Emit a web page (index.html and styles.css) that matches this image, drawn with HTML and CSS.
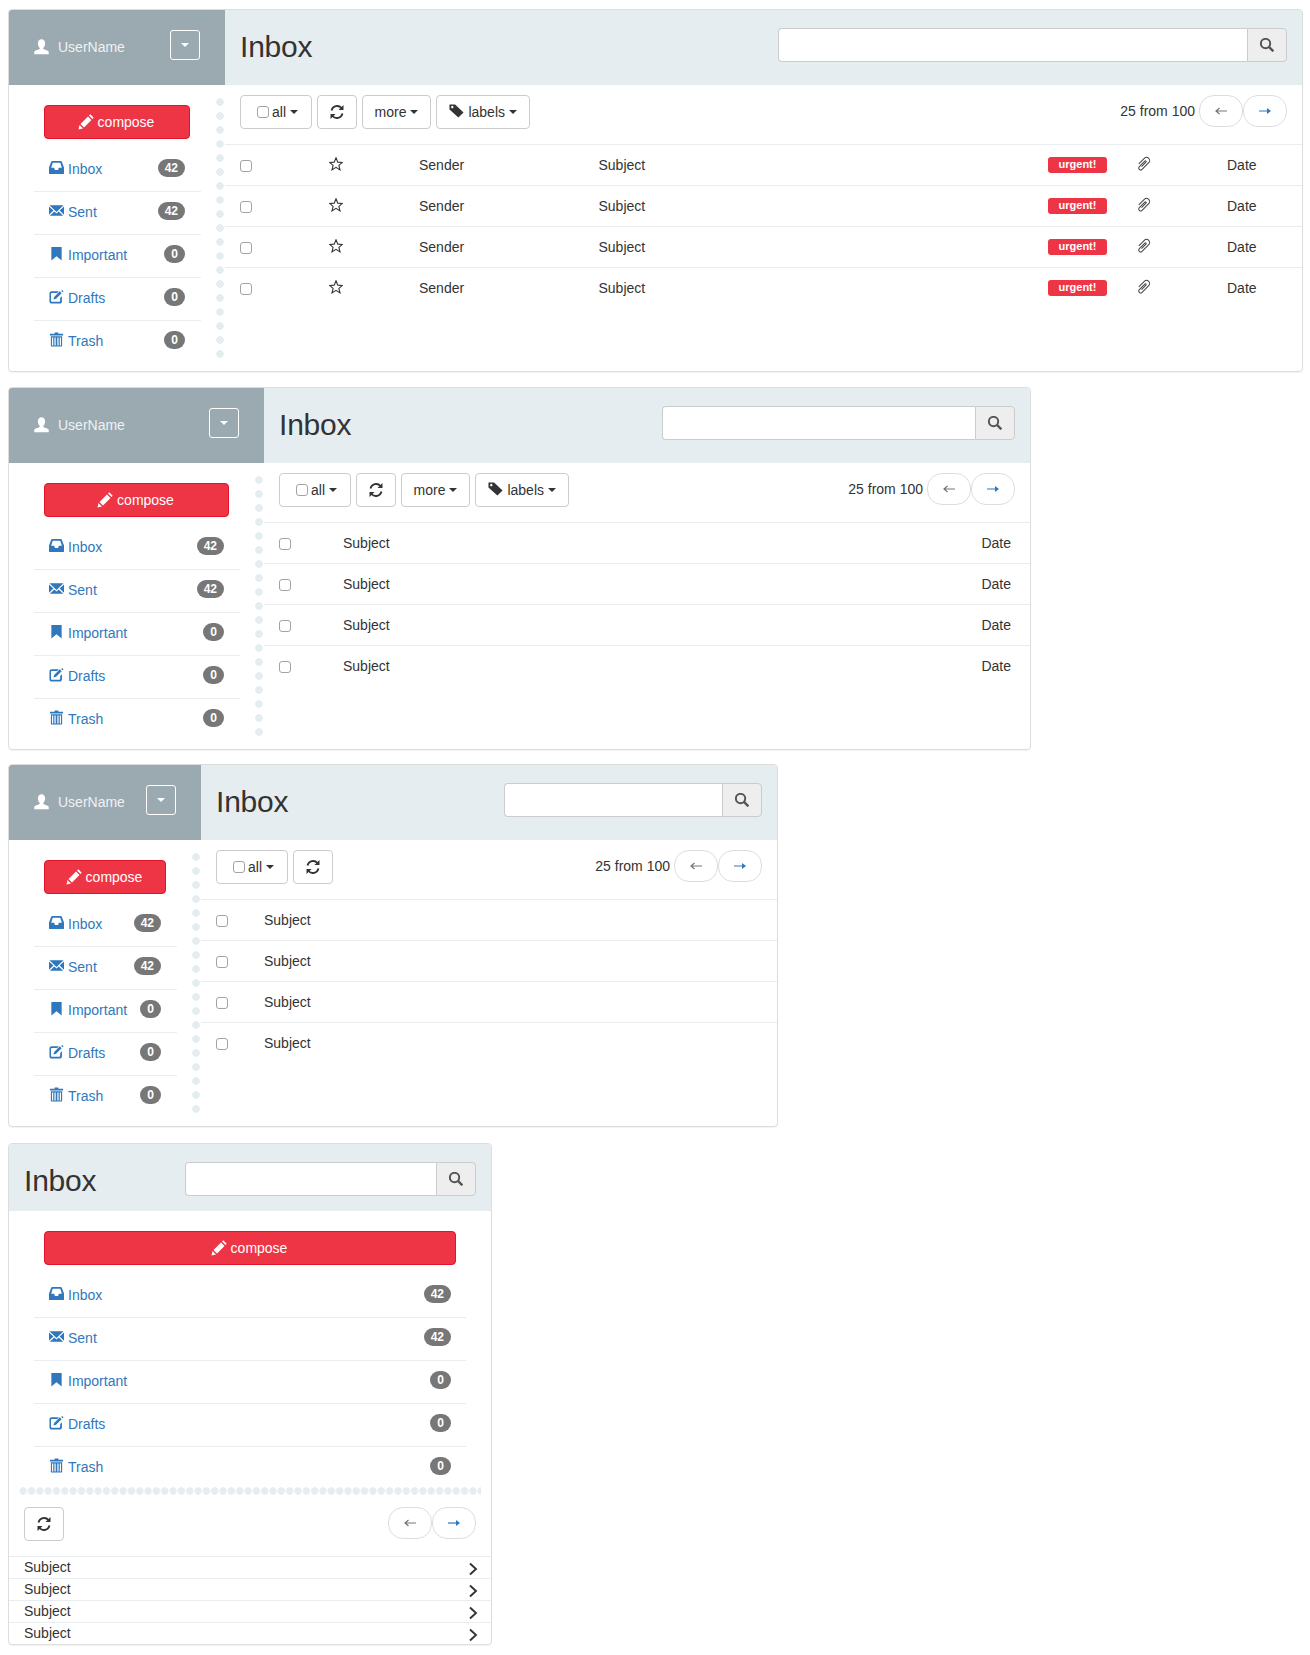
FILE: index.html
```html
<!DOCTYPE html>
<html lang="en">
<head>
    <meta charset="UTF-8">
    <meta name="viewport" content="width=device-width, initial-scale=1.0">
    <title>Mailbox layouts</title>
    <link rel="stylesheet" href="styles.css">
</head>
<body>
    <!-- icons used by all four boxes -->
    <svg class="sprite" xmlns="http://www.w3.org/2000/svg">
        <symbol id="i-user" viewBox="1 0.5 14 15.5"><path d="M8 0.800c2.200 0 3.500 1.700 3.500 4 0 1.800-.8 3.500-1.800 4.300v1.200c1.800.8 5.300 1.600 5.300 3v1.900H1v-1.900c0-1.400 3.500-2.200 5.300-3V9.100C5.300 8.300 4.500 6.600 4.500 4.800c0-2.300 1.300-4 3.500-4z"/></symbol>
        <symbol id="i-pencil" viewBox="0 0 16 16"><path d="M0.500 15.500l1-4.500 3.500 3.500zM2.500 10l7.500-7.500 3.500 3.500-7.500 7.500zM11 1.500l1.300-1.200 3.400 3.400-1.200 1.300z"/></symbol>
        <symbol id="i-inbox" viewBox="0 0 16 16"><path fill-rule="evenodd" d="M3.500 1h9c.6 0 1 .3 1.200.8L16 8v6c0 .6-.4 1-1 1H1c-.6 0-1-.4-1-1V8l2.300-6.200C2.500 1.300 2.900 1 3.500 1zM4 3L2.300 8.300H5.500l.8 2.300h3.400l.8-2.300h3.200L12 3z"/></symbol>
        <symbol id="i-envelope" viewBox="0 0 16 16"><path d="M0.500 2.500h15L8 9.500zM0 3.800v8.800l4.700-4.500zM16 3.800v8.800l-4.700-4.500zM0.800 13.500l4.900-4.500L8 11.200l2.300-2.200 4.900 4.500z"/></symbol>
        <symbol id="i-bookmark" viewBox="0 0 16 16"><path d="M2.500 1h11v14.500L8 11l-5.500 4.500z"/></symbol>
        <symbol id="i-edit" viewBox="0 0 16 16"><path d="M2.800 2.500h7.700L8.700 4.300H3c-.5 0-.9.400-.9.900v7.600c0 .5.400.9.900.9h8c.5 0 .9-.4.900-.9V9.500l1.900-1.900v5.600c0 1.300-1 2.300-2.300 2.300H2.800C1.500 15.500.500 14.500.500 13.200V4.800C.500 3.500 1.500 2.500 2.800 2.500zM5.500 8.500l6-6 2 2-6 6-2.800.8zM14 1l1.500 1.500-1 1-1.500-1.500z"/></symbol>
        <symbol id="i-trash" viewBox="0 0 16 16"><path d="M6 .5h4v1.300h5v2H1v-2h5zM2 4.500h12V15c0 .3-.2.500-.5.500h-11c-.3 0-.5-.2-.5-.5zM3.200 5.800v8.500h1.300V5.800zM5.800 5.800v8.500h1.300V5.800zM8.900 5.800v8.500h1.300V5.800zM11.500 5.800v8.500h1.300V5.800z" fill-rule="evenodd"/></symbol>
        <symbol id="i-star" viewBox="1 1 14 14"><path d="M8 1.800l1.800 4.300 4.600.3-3.500 3 1.100 4.500L8 11.400l-4 2.500 1.100-4.500-3.500-3 4.600-.3z" fill="none" stroke="currentColor" stroke-width="1.100"/></symbol>
        <symbol id="i-refresh" viewBox="1 1 14 14"><path d="M2.500 6.500A5.800 5.800 0 0 1 12.500 4M13.500 9.500A5.800 5.800 0 0 1 3.500 12" fill="none" stroke="currentColor" stroke-width="1.800"/><path d="M14.500 1v5h-5zM1.500 15v-5h5z"/></symbol>
        <symbol id="i-tag" viewBox="0 0 16 16"><path fill-rule="evenodd" d="M0.500 1.500h6l9 8.500-5.500 5.500-9.500-8.500zM3.500 3a1.300 1.300 0 1 0 .01 0z"/></symbol>
        <symbol id="i-clip" viewBox="0 0 16 16"><path transform="translate(8.200 7.800) rotate(45) scale(.78)" d="M-4 4V-6a4 4 0 0 1 8 0V6a2.500 2.500 0 0 1-5 0V-4a1 1 0 0 1 2 0V4" fill="none" stroke="currentColor" stroke-width="1.300"/></symbol>
        <symbol id="i-search" viewBox="0.800 0.800 14.400 14.400"><circle cx="6.500" cy="6.500" r="4.800" fill="none" stroke="currentColor" stroke-width="2"/><path d="M10 10l4.500 4.500" stroke="currentColor" stroke-width="2.400"/></symbol>
        <symbol id="i-left" viewBox="0 0 12 8"><path d="M1 4h11M4.500 1L1 4l3.500 3" fill="none" stroke="currentColor" stroke-width="1.200"/></symbol>
        <symbol id="i-right" viewBox="0 0 12 8"><path d="M0 4h11" fill="none" stroke="currentColor" stroke-width="1.200"/><path d="M8 1l4 3-4 3z"/></symbol>
        <symbol id="i-chevron" viewBox="0 0 10 14"><path d="M2 1.500L8 7l-6 5.500" fill="none" stroke="currentColor" stroke-width="1.900"/></symbol>
    </svg>

    <!-- widest -->
    <div class="mailbox mailbox-lg">
        <div class="box-head">
            <div class="user-bar">
                <svg class="icon"><use href="#i-user"/></svg>
                <span class="user-name">UserName</span>
                <button class="user-toggle"><span class="caret"></span></button>
            </div>
            <div class="title-bar">
                <h1>Inbox</h1>
                <div class="search">
                    <input type="text">
                    <button><svg class="icon"><use href="#i-search"/></svg></button>
                </div>
            </div>
        </div>
        <div class="box-body">
            <div class="side">
                <button class="compose"><svg class="icon"><use href="#i-pencil"/></svg>compose</button>
                <ul class="folders">
                    <li><a href="#"><svg class="icon"><use href="#i-inbox"/></svg>Inbox</a><span class="badge">42</span></li>
                    <li><a href="#"><svg class="icon"><use href="#i-envelope"/></svg>Sent</a><span class="badge">42</span></li>
                    <li><a href="#"><svg class="icon"><use href="#i-bookmark"/></svg>Important</a><span class="badge">0</span></li>
                    <li><a href="#"><svg class="icon"><use href="#i-edit"/></svg>Drafts</a><span class="badge">0</span></li>
                    <li><a href="#"><svg class="icon"><use href="#i-trash"/></svg>Trash</a><span class="badge">0</span></li>
                </ul>
            </div>
            <div class="dots"></div>
            <div class="main">
                <div class="toolbar">
                    <button class="btn btn-all"><input type="checkbox">all<span class="caret"></span></button>
                    <button class="btn btn-icon"><svg class="icon"><use href="#i-refresh"/></svg></button>
                    <button class="btn">more<span class="caret"></span></button>
                    <button class="btn"><svg class="icon icon-tag"><use href="#i-tag"/></svg>labels<span class="caret"></span></button>
                    <div class="pager">
                        <span>25 from 100</span>
                        <button class="page-btn"><svg class="arrow"><use href="#i-left"/></svg></button>
                        <button class="page-btn page-next"><svg class="arrow"><use href="#i-right"/></svg></button>
                    </div>
                </div>
                <div class="row row-full">
                    <input type="checkbox"><svg class="icon icon-star"><use href="#i-star"/></svg><span>Sender</span><span>Subject</span><span class="label">urgent!</span><svg class="icon icon-clip"><use href="#i-clip"/></svg><span>Date</span>
                </div>
                <div class="row row-full">
                    <input type="checkbox"><svg class="icon icon-star"><use href="#i-star"/></svg><span>Sender</span><span>Subject</span><span class="label">urgent!</span><svg class="icon icon-clip"><use href="#i-clip"/></svg><span>Date</span>
                </div>
                <div class="row row-full">
                    <input type="checkbox"><svg class="icon icon-star"><use href="#i-star"/></svg><span>Sender</span><span>Subject</span><span class="label">urgent!</span><svg class="icon icon-clip"><use href="#i-clip"/></svg><span>Date</span>
                </div>
                <div class="row row-full">
                    <input type="checkbox"><svg class="icon icon-star"><use href="#i-star"/></svg><span>Sender</span><span>Subject</span><span class="label">urgent!</span><svg class="icon icon-clip"><use href="#i-clip"/></svg><span>Date</span>
                </div>
            </div>
        </div>
    </div>

    <!-- medium -->
    <div class="mailbox mailbox-md">
        <div class="box-head">
            <div class="user-bar">
                <svg class="icon"><use href="#i-user"/></svg>
                <span class="user-name">UserName</span>
                <button class="user-toggle"><span class="caret"></span></button>
            </div>
            <div class="title-bar">
                <h1>Inbox</h1>
                <div class="search">
                    <input type="text">
                    <button><svg class="icon"><use href="#i-search"/></svg></button>
                </div>
            </div>
        </div>
        <div class="box-body">
            <div class="side">
                <button class="compose"><svg class="icon"><use href="#i-pencil"/></svg>compose</button>
                <ul class="folders">
                    <li><a href="#"><svg class="icon"><use href="#i-inbox"/></svg>Inbox</a><span class="badge">42</span></li>
                    <li><a href="#"><svg class="icon"><use href="#i-envelope"/></svg>Sent</a><span class="badge">42</span></li>
                    <li><a href="#"><svg class="icon"><use href="#i-bookmark"/></svg>Important</a><span class="badge">0</span></li>
                    <li><a href="#"><svg class="icon"><use href="#i-edit"/></svg>Drafts</a><span class="badge">0</span></li>
                    <li><a href="#"><svg class="icon"><use href="#i-trash"/></svg>Trash</a><span class="badge">0</span></li>
                </ul>
            </div>
            <div class="dots"></div>
            <div class="main">
                <div class="toolbar">
                    <button class="btn btn-all"><input type="checkbox">all<span class="caret"></span></button>
                    <button class="btn btn-icon"><svg class="icon"><use href="#i-refresh"/></svg></button>
                    <button class="btn">more<span class="caret"></span></button>
                    <button class="btn"><svg class="icon icon-tag"><use href="#i-tag"/></svg>labels<span class="caret"></span></button>
                    <div class="pager">
                        <span>25 from 100</span>
                        <button class="page-btn"><svg class="arrow"><use href="#i-left"/></svg></button>
                        <button class="page-btn page-next"><svg class="arrow"><use href="#i-right"/></svg></button>
                    </div>
                </div>
                <div class="row row-date"><input type="checkbox"><span>Subject</span><span>Date</span></div>
                <div class="row row-date"><input type="checkbox"><span>Subject</span><span>Date</span></div>
                <div class="row row-date"><input type="checkbox"><span>Subject</span><span>Date</span></div>
                <div class="row row-date"><input type="checkbox"><span>Subject</span><span>Date</span></div>
            </div>
        </div>
    </div>

    <!-- small -->
    <div class="mailbox mailbox-sm">
        <div class="box-head">
            <div class="user-bar">
                <svg class="icon"><use href="#i-user"/></svg>
                <span class="user-name">UserName</span>
                <button class="user-toggle"><span class="caret"></span></button>
            </div>
            <div class="title-bar">
                <h1>Inbox</h1>
                <div class="search">
                    <input type="text">
                    <button><svg class="icon"><use href="#i-search"/></svg></button>
                </div>
            </div>
        </div>
        <div class="box-body">
            <div class="side">
                <button class="compose"><svg class="icon"><use href="#i-pencil"/></svg>compose</button>
                <ul class="folders">
                    <li><a href="#"><svg class="icon"><use href="#i-inbox"/></svg>Inbox</a><span class="badge">42</span></li>
                    <li><a href="#"><svg class="icon"><use href="#i-envelope"/></svg>Sent</a><span class="badge">42</span></li>
                    <li><a href="#"><svg class="icon"><use href="#i-bookmark"/></svg>Important</a><span class="badge">0</span></li>
                    <li><a href="#"><svg class="icon"><use href="#i-edit"/></svg>Drafts</a><span class="badge">0</span></li>
                    <li><a href="#"><svg class="icon"><use href="#i-trash"/></svg>Trash</a><span class="badge">0</span></li>
                </ul>
            </div>
            <div class="dots"></div>
            <div class="main">
                <div class="toolbar">
                    <button class="btn btn-all"><input type="checkbox">all<span class="caret"></span></button>
                    <button class="btn btn-icon"><svg class="icon"><use href="#i-refresh"/></svg></button>
                    <div class="pager">
                        <span>25 from 100</span>
                        <button class="page-btn"><svg class="arrow"><use href="#i-left"/></svg></button>
                        <button class="page-btn page-next"><svg class="arrow"><use href="#i-right"/></svg></button>
                    </div>
                </div>
                <div class="row row-subject"><input type="checkbox"><span>Subject</span></div>
                <div class="row row-subject"><input type="checkbox"><span>Subject</span></div>
                <div class="row row-subject"><input type="checkbox"><span>Subject</span></div>
                <div class="row row-subject"><input type="checkbox"><span>Subject</span></div>
            </div>
        </div>
    </div>

    <!-- phone -->
    <div class="mailbox mailbox-xs">
        <div class="box-head">
            <div class="title-bar">
                <h1>Inbox</h1>
                <div class="search">
                    <input type="text">
                    <button><svg class="icon"><use href="#i-search"/></svg></button>
                </div>
            </div>
        </div>
        <div class="box-body">
            <div class="side">
                <button class="compose"><svg class="icon"><use href="#i-pencil"/></svg>compose</button>
                <ul class="folders">
                    <li><a href="#"><svg class="icon"><use href="#i-inbox"/></svg>Inbox</a><span class="badge">42</span></li>
                    <li><a href="#"><svg class="icon"><use href="#i-envelope"/></svg>Sent</a><span class="badge">42</span></li>
                    <li><a href="#"><svg class="icon"><use href="#i-bookmark"/></svg>Important</a><span class="badge">0</span></li>
                    <li><a href="#"><svg class="icon"><use href="#i-edit"/></svg>Drafts</a><span class="badge">0</span></li>
                    <li><a href="#"><svg class="icon"><use href="#i-trash"/></svg>Trash</a><span class="badge">0</span></li>
                </ul>
            </div>
            <div class="dots"></div>
            <div class="main">
                <div class="toolbar">
                    <button class="btn btn-icon"><svg class="icon"><use href="#i-refresh"/></svg></button>
                    <div class="pager">
                        <button class="page-btn"><svg class="arrow"><use href="#i-left"/></svg></button>
                        <button class="page-btn page-next"><svg class="arrow"><use href="#i-right"/></svg></button>
                    </div>
                </div>
                <div class="row row-mobile"><span>Subject</span><svg class="chevron"><use href="#i-chevron"/></svg></div>
                <div class="row row-mobile"><span>Subject</span><svg class="chevron"><use href="#i-chevron"/></svg></div>
                <div class="row row-mobile"><span>Subject</span><svg class="chevron"><use href="#i-chevron"/></svg></div>
                <div class="row row-mobile"><span>Subject</span><svg class="chevron"><use href="#i-chevron"/></svg></div>
            </div>
        </div>
    </div>
</body>
</html>
```

FILE: styles.css
```css
* {
    box-sizing: border-box;
}
body {
    margin: 0;
    padding: 9px 8px 0;
    background: #fff;
    color: #333;
    font-family: "Liberation Sans", Arial, sans-serif;
    font-size: 14px;
    line-height: 20px;
}
button {
    font: inherit;
    color: inherit;
}
input[type="checkbox"] {
    appearance: none;
    width: 12px;
    height: 12px;
    margin: 0;
    border: 1px solid #a3a3a3;
    border-radius: 3px;
    background: #fff;
}
.sprite {
    position: absolute;
    width: 0;
    height: 0;
}
.icon {
    width: 14px;
    height: 14px;
    fill: currentColor;
    flex: none;
}
.caret {
    display: inline-block;
    width: 0;
    height: 0;
    margin-left: 4px;
    vertical-align: middle;
    border-top: 4px solid currentColor;
    border-left: 4px solid transparent;
    border-right: 4px solid transparent;
}

/* box sizes */
.mailbox {
    margin-bottom: 15px;
    border: 1px solid #ddd;
    border-radius: 4px;
    box-shadow: 0 1px 1px rgba(0, 0, 0, 0.05);
    overflow: hidden;
}
.mailbox-lg {
    width: 1295px;
    --side: 216px;
    --search: 509px;
}
.mailbox-md {
    width: 1023px;
    margin-bottom: 14px;
    --side: 255px;
    --search: 353px;
}
.mailbox-sm {
    width: 770px;
    margin-bottom: 16px;
    --side: 192px;
    --search: 258px;
}
.mailbox-xs {
    width: 484px;
    --search: 291px;
}

/* head */
.box-head {
    display: flex;
    height: 75px;
}
.user-bar {
    display: flex;
    align-items: center;
    flex: none;
    width: var(--side);
    padding: 0 25px 5px;
    background: #9ba9b1;
    color: #fff;
}
.user-bar .icon {
    width: 15px;
    height: 16px;
    margin-right: 9px;
    margin-top: 3px;
}
.user-name {
    flex: 1;
    color: #eef2f4;
    margin-top: 4px;
}
.user-toggle {
    display: flex;
    align-items: center;
    justify-content: center;
    width: 30px;
    height: 30px;
    padding: 0;
    background: transparent;
    border: 1px solid #fff;
    border-radius: 3px;
    color: #fff;
}
.user-toggle .caret {
    margin: 0;
}
.title-bar {
    display: flex;
    align-items: center;
    justify-content: space-between;
    flex: 1;
    padding: 18px 15px 23px;
    background: #e6edf0;
}
h1 {
    margin: 3px 0 0;
    font-size: 30px;
    font-weight: 400;
    letter-spacing: -0.2px;
    line-height: 34px;
    color: #333;
}
.search {
    display: flex;
    width: var(--search);
    height: 34px;
}
.search input {
    flex: 1;
    min-width: 0;
    border: 1px solid #ccc;
    border-right: 0;
    border-radius: 4px 0 0 4px;
    background: #fff;
}
.search button {
    width: 40px;
    padding: 0;
    border: 1px solid #ccc;
    border-radius: 0 4px 4px 0;
    background: #eee;
    color: #555;
}
.search .icon {
    display: block;
    margin: 0 auto;
}

/* body */
.box-body {
    display: flex;
}
.side {
    flex: none;
    width: calc(var(--side) - 9px);
    padding: 20px 15px 0 25px;
}
.compose {
    display: flex;
    align-items: center;
    justify-content: center;
    width: calc(100% - 21px);
    height: 34px;
    margin: 0 11px 0 10px;
    padding: 0 2px 0 0;
    background: #ee3545;
    border: 1px solid #e2132a;
    border-radius: 4px;
    color: #fff;
}
.compose .icon {
    width: 16px;
    height: 16px;
    margin-right: 4px;
}
.folders {
    list-style: none;
    margin: 10px 0 0;
    padding: 0;
}
.folders li {
    display: flex;
    align-items: center;
    justify-content: space-between;
    height: 43px;
    padding: 0 16px 0 15px;
    border-bottom: 1px solid #e7edf1;
}
.folders li:last-child {
    border-bottom-color: transparent;
}
.folders a {
    display: flex;
    align-items: center;
    margin-top: -3px;
    color: #2f78bd;
    text-decoration: none;
}
.folders .icon {
    width: 15px;
    height: 15px;
    margin-top: -2px;
    margin-right: 4px;
}
.badge {
    padding: 3px 7px;
    margin-top: -5px;
    border-radius: 10px;
    background: #777;
    color: #fff;
    font-size: 12px;
    font-weight: 700;
    line-height: 12px;
}
.dots {
    flex: none;
    width: 8px;
    height: 266px;
    margin: 10px 1px 10px 0;
    background: radial-gradient(circle, #e6edf0 3.5px, transparent 4px) center top / 8px 14px repeat-y;
}
.main {
    flex: 1;
    min-width: 0;
}

/* toolbar */
.toolbar {
    display: flex;
    align-items: flex-start;
    gap: 5px;
    padding: 10px 15px 15px;
}
.btn {
    display: flex;
    align-items: center;
    height: 34px;
    padding: 0 12px;
    background: #fff;
    border: 1px solid #ccc;
    border-radius: 4px;
}
.btn .caret {
    margin-left: 4px;
}
.btn-all {
    padding: 0 12.5px 0 16px;
}
.btn-all input {
    margin-right: 3px;
}
.btn-icon {
    width: 40px;
    padding: 0 12px;
}
.icon-tag {
    margin-right: 4px;
    margin-top: -3px;
    width: 15px;
    height: 15px;
}
.pager {
    display: flex;
    align-items: center;
    gap: 0;
    margin-left: auto;
    height: 32px;
}
.pager span {
    margin-right: 4px;
}
.page-btn {
    display: flex;
    align-items: center;
    justify-content: center;
    width: 44px;
    height: 32px;
    padding: 0;
    background: #fff;
    border: 1px solid #ddd;
    border-radius: 15px;
    color: #777;
}
.page-next {
    color: #2f78bd;
}
.arrow {
    width: 12px;
    height: 8px;
    fill: currentColor;
}

/* message rows */
.row {
    display: grid;
    align-items: center;
    height: 41px;
    padding: 0 15px;
    border-top: 1px solid #e7edf1;
}
.row-full {
    grid-template-columns: 89px 90px 179.500px 1fr 87px 92px 60px;
}
.row-date {
    grid-template-columns: 64px 1fr auto;
    padding-right: 19px;
}
.row-subject {
    grid-template-columns: 48px 1fr;
}
.row-full input,
.row-date input,
.row-subject input {
    margin-top: 2px;
}
.icon-star {
    margin-top: -3px;
}
.icon-clip {
    width: 16px;
    height: 16px;
    margin-top: -3px;
    color: #444;
}
.label {
    width: 59px;
    height: 16px;
    border-radius: 3px;
    background: #ee3545;
    color: #fff;
    font-size: 11px;
    font-weight: 700;
    line-height: 15px;
    text-align: center;
}

/* phone box stacks everything */
.mailbox-xs .box-head {
    height: 67px;
}
.mailbox-xs .title-bar {
    padding: 18px 15px 15px;
}
.mailbox-xs .box-body {
    flex-direction: column;
}
.mailbox-xs .side {
    width: 100%;
    padding-right: 25px;
}
.mailbox-xs .compose {
    width: calc(100% - 20px);
    margin: 0 10px;
}
.mailbox-xs .folders li {
    padding-right: 15px;
}
.mailbox-xs .dots {
    width: auto;
    height: 8px;
    margin: -3px 10px 0;
    background: radial-gradient(circle, #e6edf0 3.5px, transparent 4px) left center / 8.33px 8px repeat-x;
}
.mailbox-xs .toolbar {
    padding-top: 12px;
}
.row-mobile {
    display: flex;
    justify-content: space-between;
    height: 22px;
    padding-right: 13px;
    line-height: 21px;
}
.chevron {
    width: 10px;
    height: 14px;
    margin-top: 2px;
    fill: none;
    color: #333;
}
```
